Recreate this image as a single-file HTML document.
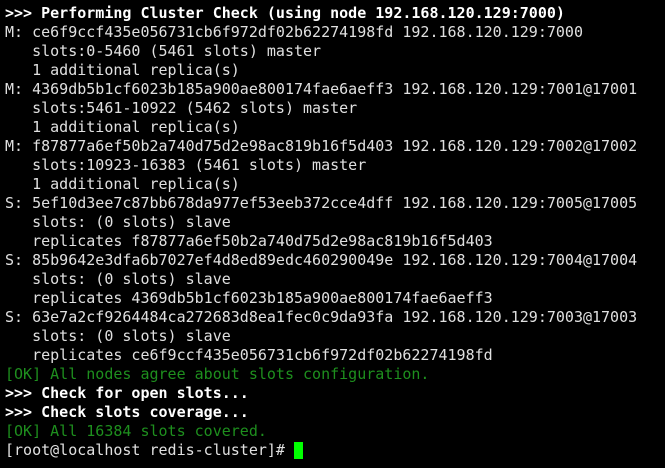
<!DOCTYPE html>
<html><head><meta charset="utf-8"><style>
html,body{margin:0;padding:0;background:#000;width:665px;height:468px;overflow:hidden}
pre{margin:0;position:absolute;left:5px;top:4px;font-family:"DejaVu Sans Mono","Liberation Mono",monospace;font-size:15px;line-height:19px;color:#e0e0e0;white-space:pre}
b{color:#fff}
.g{color:#1e8f1e}
.c{display:inline-block;width:9px;height:17px;background:#00ff00;vertical-align:-4px}
</style></head><body><pre><b>&gt;&gt;&gt; Performing Cluster Check (using node 192.168.120.129:7000)</b>
M: ce6f9ccf435e056731cb6f972df02b62274198fd 192.168.120.129:7000
   slots:0-5460 (5461 slots) master
   1 additional replica(s)
M: 4369db5b1cf6023b185a900ae800174fae6aeff3 192.168.120.129:7001@17001
   slots:5461-10922 (5462 slots) master
   1 additional replica(s)
M: f87877a6ef50b2a740d75d2e98ac819b16f5d403 192.168.120.129:7002@17002
   slots:10923-16383 (5461 slots) master
   1 additional replica(s)
S: 5ef10d3ee7c87bb678da977ef53eeb372cce4dff 192.168.120.129:7005@17005
   slots: (0 slots) slave
   replicates f87877a6ef50b2a740d75d2e98ac819b16f5d403
S: 85b9642e3dfa6b7027ef4d8ed89edc460290049e 192.168.120.129:7004@17004
   slots: (0 slots) slave
   replicates 4369db5b1cf6023b185a900ae800174fae6aeff3
S: 63e7a2cf9264484ca272683d8ea1fec0c9da93fa 192.168.120.129:7003@17003
   slots: (0 slots) slave
   replicates ce6f9ccf435e056731cb6f972df02b62274198fd
<span class="g">[OK] All nodes agree about slots configuration.</span>
<b>&gt;&gt;&gt; Check for open slots...</b>
<b>&gt;&gt;&gt; Check slots coverage...</b>
<span class="g">[OK] All 16384 slots covered.</span>
[root@localhost redis-cluster]# <span class="c"></span></pre></body></html>
